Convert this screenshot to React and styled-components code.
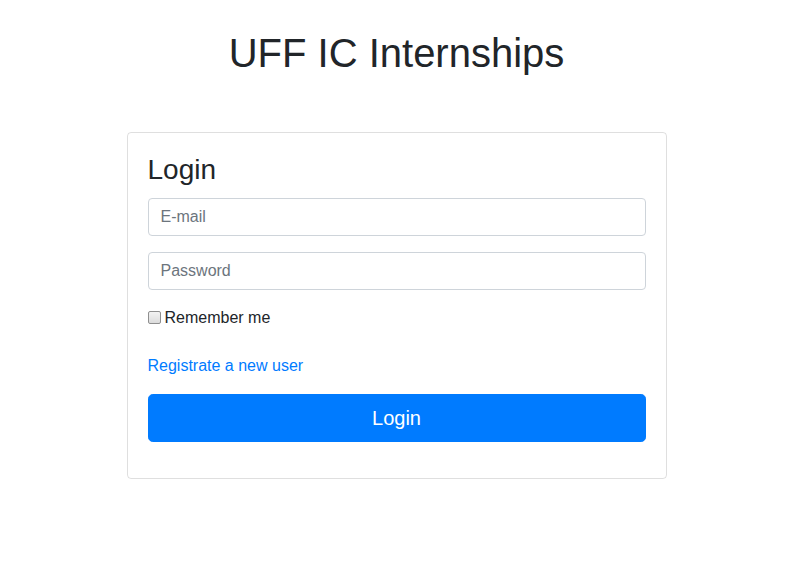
import styled, { createGlobalStyle } from "styled-components";

const GlobalStyle = createGlobalStyle`
  body {
    margin: 0;
    font-family: "Liberation Sans", Arial, sans-serif;
    font-size: 16px;
    line-height: 1.5;
    color: #212529;
    background: #fff;
  }
  * {
    box-sizing: border-box;
  }
`;

const App = () => {
  return (
    <Page>
      <GlobalStyle />
      <Title>UFF IC Internships</Title>
      <Card>
        <CardTitle>Login</CardTitle>
        <form onSubmit={(e) => e.preventDefault()}>
          <FormGroup>
            <Input type="email" placeholder="E-mail" />
          </FormGroup>
          <FormGroup>
            <Input type="password" placeholder="Password" />
          </FormGroup>
          <Check>
            <input type="checkbox" />
            Remember me
          </Check>
          <RegisterLink href="#">Registrate a new user</RegisterLink>
          <Button type="submit">Login</Button>
        </form>
      </Card>
    </Page>
  );
};

const Page = styled.div`
  display: flex;
  flex-direction: column;
  align-items: center;
  padding-left: 2px;
`;

const Title = styled.h1`
  margin: 29px 0 55px;
  font-size: 40px;
  font-weight: 400;
  line-height: 1.2;
`;

const Card = styled.div`
  width: 540px;
  padding: 20px 20px 20px;
  border: 1px solid rgba(0, 0, 0, 0.125);
  border-radius: 4px;
`;

const CardTitle = styled.h3`
  margin: 0 0 11px;
  font-size: 28px;
  font-weight: 400;
  line-height: 1.2;
`;

const FormGroup = styled.div`
  margin-bottom: 16px;
`;

const Input = styled.input`
  display: block;
  width: 100%;
  height: 38px;
  padding: 6px 12px;
  font-family: inherit;
  font-size: 16px;
  color: #495057;
  border: 1px solid #ced4da;
  border-radius: 4px;
  outline: none;

  &::placeholder {
    color: #6c757d;
  }
`;

const Check = styled.label`
  display: flex;
  align-items: center;
  line-height: 24px;

  input {
    appearance: none;
    margin: 0 4px 0 0;
    width: 13px;
    height: 13px;
    border: 1px solid #8f8f8f;
    border-radius: 2px;
    background: linear-gradient(#f2f2f2, #dcdcdc);
  }
  input:checked {
    background: #1a73e8;
    border-color: #1a73e8;
  }
`;

const RegisterLink = styled.a`
  display: block;
  margin-top: 24px;
  color: #007bff;
  text-decoration: none;
  line-height: 24px;
`;

const Button = styled.button`
  display: block;
  width: 100%;
  margin: 16px 0;
  padding: 8px 16px;
  font-family: inherit;
  font-size: 20px;
  line-height: 1.5;
  color: #fff;
  background: #007bff;
  border: 1px solid #007bff;
  border-radius: 4.8px;
  cursor: pointer;
`;

export default App;
